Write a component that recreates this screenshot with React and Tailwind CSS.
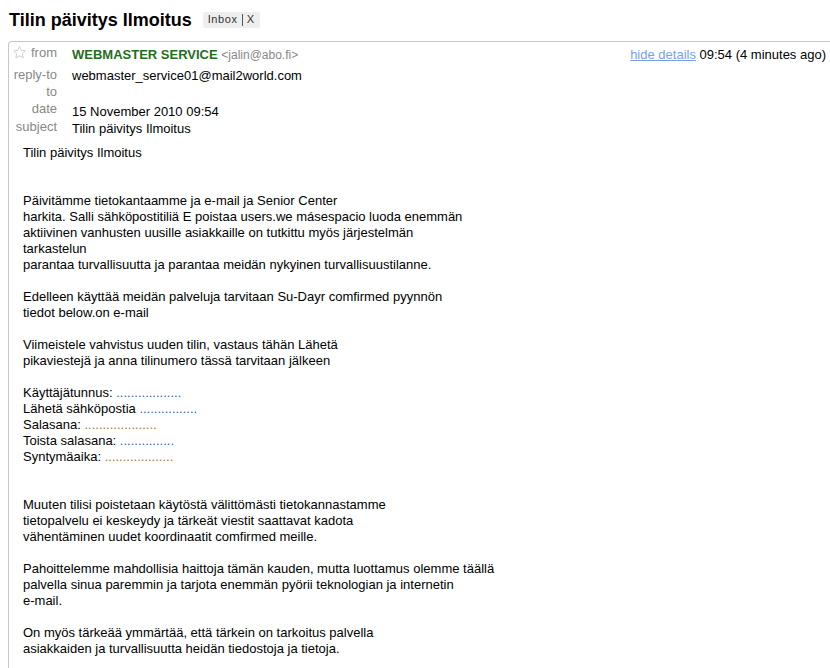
import React from 'react';

const headerRows = [
  { label: 'reply-to', value: 'webmaster_service01@mail2world.com', h: 'h-[17px]', pad: 'pt-[1px]' },
  { label: 'to', value: '', h: 'h-[17px]', pad: 'pt-[1px]' },
  { label: 'date', value: '15 November 2010 09:54', h: 'h-[18px]', pad: 'pt-[3px]' },
  { label: 'subject', value: 'Tilin päivitys Ilmoitus', h: 'h-[19px]', pad: 'pt-[2px]' },
];

const Dots = ({ n, tone }) => (
  <span className={tone === 'blue' ? 'text-[#2f5fae]' : 'text-[#a8742a]'}>{'.'.repeat(n)}</span>
);

const StarIcon = () => (
  <svg width="15" height="15" viewBox="0 0 24 24" className="mr-[4px] mt-[1px]">
    <path
      d="M12 2.5l2.9 6.1 6.6.8-4.9 4.6 1.3 6.6L12 17.3l-5.9 3.3 1.3-6.6-4.9-4.6 6.6-.8z"
      fill="none"
      stroke="#c8c8c8"
      strokeWidth="1.4"
      strokeLinejoin="round"
    />
  </svg>
);

const Blank = () => <div className="h-[16px]" />;

export default function App() {
  return (
    <div className="w-[830px] h-[668px] overflow-hidden bg-white text-black font-['Liberation_Sans',Arial,sans-serif] text-[13px]">
      {/* Subject line */}
      <div className="flex items-center h-[41px] pl-[9px] pb-[2px]">
        <h1 className="text-[18px] font-bold leading-none">Tilin päivitys Ilmoitus</h1>
        <span className="ml-[11px] flex items-center bg-[#eeeeee] rounded-[2px] px-[5px] h-[16px] text-[11px] text-[#333] tracking-[0.6px]">
          Inbox
          <span className="mx-[4px] h-[12px] border-l border-[#555]" />
          X
        </span>
      </div>

      {/* Message card */}
      <div className="ml-[8px] border-t border-l border-[#c6c6c6] rounded-tl-[4px] h-full">
        {/* Header details */}
        <div className="pt-[2px] flex">
          <div className="flex-1">
            <div className="flex h-[22px]">
              <div className="w-[48px] flex justify-end items-start text-[#888] leading-[17px]">
                <StarIcon />
                from
              </div>
              <div className="ml-[15px] pt-[2px] leading-[17px]">
                <span className="font-bold text-[#1f6e22]">WEBMASTER SERVICE</span>{' '}
                <span className="text-[12px] text-[#888]">&lt;jalin@abo.fi&gt;</span>
              </div>
            </div>
            {headerRows.map((r) => (
              <div key={r.label} className={`flex ${r.h}`}>
                <div className="w-[48px] text-right text-[#888] leading-[17px]">{r.label}</div>
                <div className={`ml-[15px] ${r.pad} leading-[17px]`}>{r.value}</div>
              </div>
            ))}
          </div>
          <div className="pr-[4px] pt-[2px] leading-[17px] whitespace-nowrap">
            <span className="text-[#7b9fe6] underline">hide details</span> 09:54 (4 minutes ago)
          </div>
        </div>

        {/* Body */}
        <div className="pl-[14px] pt-[8px] leading-[16px]">
          <div>Tilin päivitys Ilmoitus</div>
          <Blank />
          <Blank />
          <div>Päivitämme tietokantaamme ja e-mail ja Senior Center</div>
          <div>harkita. Salli sähköpostitiliä E poistaa users.we másespacio luoda enemmän</div>
          <div>aktiivinen vanhusten uusille asiakkaille on tutkittu myös järjestelmän</div>
          <div>tarkastelun</div>
          <div>parantaa turvallisuutta ja parantaa meidän nykyinen turvallisuustilanne.</div>
          <Blank />
          <div>Edelleen käyttää meidän palveluja tarvitaan Su-Dayr comfirmed pyynnön</div>
          <div>tiedot below.on e-mail</div>
          <Blank />
          <div>Viimeistele vahvistus uuden tilin, vastaus tähän Lähetä</div>
          <div>pikaviestejä ja anna tilinumero tässä tarvitaan jälkeen</div>
          <Blank />
          <div>Käyttäjätunnus: <Dots n={18} tone="blue" /></div>
          <div>Lähetä sähköpostia <Dots n={16} tone="blue" /></div>
          <div>Salasana: <Dots n={20} tone="orange" /></div>
          <div>Toista salasana: <Dots n={15} tone="blue" /></div>
          <div>Syntymäaika: <Dots n={19} tone="orange" /></div>
          <Blank />
          <Blank />
          <div>Muuten tilisi poistetaan käytöstä välittömästi tietokannastamme</div>
          <div>tietopalvelu ei keskeydy ja tärkeät viestit saattavat kadota</div>
          <div>vähentäminen uudet koordinaatit comfirmed meille.</div>
          <Blank />
          <div>Pahoittelemme mahdollisia haittoja tämän kauden, mutta luottamus olemme täällä</div>
          <div>palvella sinua paremmin ja tarjota enemmän pyörii teknologian ja internetin</div>
          <div>e-mail.</div>
          <Blank />
          <div>On myös tärkeää ymmärtää, että tärkein on tarkoitus palvella</div>
          <div>asiakkaiden ja turvallisuutta heidän tiedostoja ja tietoja.</div>
        </div>
      </div>
    </div>
  );
}
